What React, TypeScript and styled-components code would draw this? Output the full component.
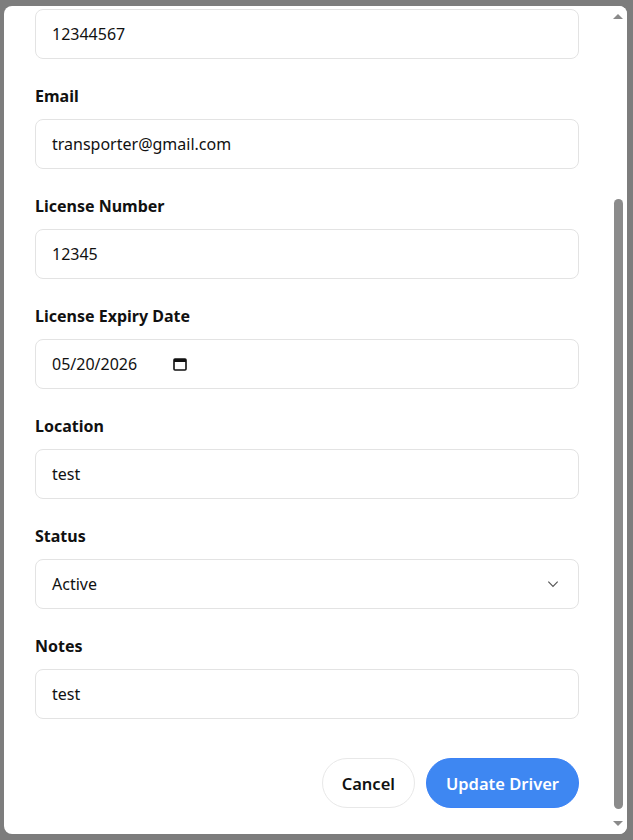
import React from "react";
import styled, { createGlobalStyle } from "styled-components";

const Global = createGlobalStyle`
  html, body { margin: 0; padding: 0; background: #7d7d7d; }
  body { font-family: "Noto Sans", "Open Sans", sans-serif; }
  #root { height: 840px; overflow: hidden; }
`;

const Modal = styled.div`
  margin: 6px 6px 0 4px;
  height: 828px;
  background: #fff;
  border-radius: 8px;
  display: flex;
  overflow: hidden;
`;

const Content = styled.div`
  flex: 1;
  padding: 3px 30px 0 31px;
  display: flex;
  flex-direction: column;
`;

const Field = styled.div`
  display: flex;
  flex-direction: column;
  gap: 11px;
  margin-bottom: 25px;
`;

const Label = styled.div`
  font-size: 16px;
  font-weight: 700;
  color: #111;
  line-height: 24px;
`;

const Input = styled.div`
  height: 48px;
  border: 1px solid #e3e3e3;
  border-radius: 8px;
  display: flex;
  align-items: center;
  justify-content: space-between;
  padding: 0 18px 0 16px;
  font-size: 16px;
  color: #111;
`;

const DateWrap = styled.span`
  display: flex;
  align-items: center;
  gap: 36px;
`;

const Actions = styled.div`
  display: flex;
  justify-content: flex-end;
  gap: 11px;
  margin-top: 14px;
`;

const Button = styled.button<{ $primary?: boolean }>`
  height: 50px;
  border-radius: 25px;
  padding: 0 19px;
  font: 600 16.5px "Noto Sans", sans-serif;
  border: 1px solid ${(p) => (p.$primary ? "#3b82f6" : "#e8e8e8")};
  background: ${(p) => (p.$primary ? "#3e87f2" : "#fff")};
  color: ${(p) => (p.$primary ? "#fff" : "#111")};
`;

const Scrollbar = styled.div`
  width: 18px;
  display: flex;
  flex-direction: column;
  align-items: center;
  background: #fff;
  padding: 4px 0;
`;

const Arrow = styled.div<{ $down?: boolean }>`
  width: 0;
  height: 0;
  border-left: 5px solid transparent;
  border-right: 5px solid transparent;
  ${(p) => (p.$down ? "border-top: 5px solid #8a8a8a;" : "border-bottom: 5px solid #8a8a8a;")}
  margin: 4px 0;
`;

const Track = styled.div`
  flex: 1;
  width: 100%;
  display: flex;
  flex-direction: column;
  align-items: center;
  padding-top: 176px;
  padding-bottom: 8px;
`;

const Thumb = styled.div`
  flex: 1;
  width: 9px;
  border-radius: 5px;
  background: #8b8b8b;
`;

const fields: [string | null, string][] = [
  [null, "12344567"],
  ["Email", "transporter@gmail.com"],
  ["License Number", "12345"],
];

export default function App() {
  return (
    <>
      <Global />
      <Modal>
        <Content>
          {fields.map(([l, v], i) => (
            <Field key={i}>
              {l && <Label>{l}</Label>}
              <Input>{v}</Input>
            </Field>
          ))}
          <Field>
            <Label>License Expiry Date</Label>
            <Input>
              <DateWrap>
                05/20/2026
                <svg width="14" height="14" viewBox="0 0 14 14">
                  <rect x="1" y="2" width="12" height="11" rx="1" fill="none" stroke="#111" strokeWidth="1.6" />
                  <rect x="1" y="2" width="12" height="3" fill="#111" />
                </svg>
              </DateWrap>
            </Input>
          </Field>
          <Field>
            <Label>Location</Label>
            <Input>test</Input>
          </Field>
          <Field>
            <Label>Status</Label>
            <Input>
              Active
              <svg width="14" height="14" viewBox="0 0 24 24" fill="none" stroke="#555" strokeWidth="2">
                <path d="M4 8l8 8 8-8" />
              </svg>
            </Input>
          </Field>
          <Field>
            <Label>Notes</Label>
            <Input>test</Input>
          </Field>
          <Actions>
            <Button>Cancel</Button>
            <Button $primary>Update Driver</Button>
          </Actions>
        </Content>
        <Scrollbar>
          <Arrow />
          <Track>
            <Thumb />
          </Track>
          <Arrow $down />
        </Scrollbar>
      </Modal>
    </>
  );
}
